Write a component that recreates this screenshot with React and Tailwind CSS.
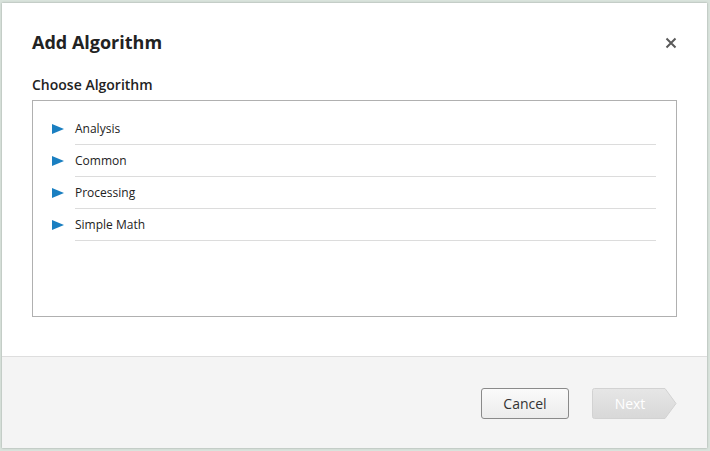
import React from 'react';

const groups = ['Analysis', 'Common', 'Processing', 'Simple Math'];

const App = () => {
  return (
    <div className="w-[710px] h-[451px] bg-[#d9e3dc] pt-[3px] pl-[2px] font-['Open_Sans',sans-serif]">
      <div className="w-[705px] h-[445px] bg-white flex flex-col shadow-[0_0_2px_rgba(0,0,0,0.3)]">
        {/* Header */}
        <div className="flex items-center justify-between pl-[30px] pr-[30px] pt-[27px]">
          <h1 className="text-[18px] font-bold text-[#222] leading-[24px]">Add Algorithm</h1>
          <button className="text-[#555] mt-[1px]">
            <svg width="12" height="12" viewBox="0 0 12 12">
              <path d="M1.5 1.5 L10.5 10.5 M10.5 1.5 L1.5 10.5" stroke="#5a5a5a" strokeWidth="2" />
            </svg>
          </button>
        </div>

        {/* Body */}
        <div className="pl-[30px] pr-[30px] pt-[21px] flex-1">
          <h2 className="text-[14px] font-semibold text-[#222] leading-[20px]">Choose Algorithm</h2>
          <div className="mt-[5px] h-[217px] border border-[#b0b0b0] pt-[12px] pl-[19px] pr-[20px]">
            {groups.map((name) => (
              <div key={name} className="flex items-stretch h-[32px]">
                <div className="w-[23px] flex items-center">
                  <svg width="12" height="10" viewBox="0 0 12 10">
                    <path d="M0 0 L12 5 L0 10 Z" fill="#1a7fc1" />
                  </svg>
                </div>
                <div className="flex-1 flex items-center border-b border-[#dcdcdc] text-[12px] text-[#222]">
                  {name}
                </div>
              </div>
            ))}
          </div>
        </div>

        {/* Footer */}
        <div className="h-[92px] bg-[#f4f4f4] border-t border-[#dedede] flex items-center justify-end pr-[30px] pt-[1px] gap-[23px]">
          <button className="w-[88px] h-[31px] rounded-[3px] border border-[#8a8a8a] bg-gradient-to-b from-[#fafafa] to-[#ececec] text-[14px] text-[#333]">
            Cancel
          </button>
          <div className="relative w-[85px] h-[31px]">
            <svg className="absolute inset-0" width="85" height="31" viewBox="0 0 85 31">
              <defs>
                <linearGradient id="ng" x1="0" y1="0" x2="0" y2="1">
                  <stop offset="0" stopColor="#e6e6e6" />
                  <stop offset="1" stopColor="#d8d8d8" />
                </linearGradient>
              </defs>
              <path d="M2.5 0.5 H73 L84 15.5 L73 30.5 H2.5 Q0.5 30.5 0.5 28.5 V2.5 Q0.5 0.5 2.5 0.5 Z" fill="url(#ng)" stroke="#d2d2d2" />
            </svg>
            <span className="absolute left-0 w-[76px] top-0 h-[31px] flex items-center justify-center text-[14px] text-white">
              Next
            </span>
          </div>
        </div>
      </div>
    </div>
  );
};

export default App;
